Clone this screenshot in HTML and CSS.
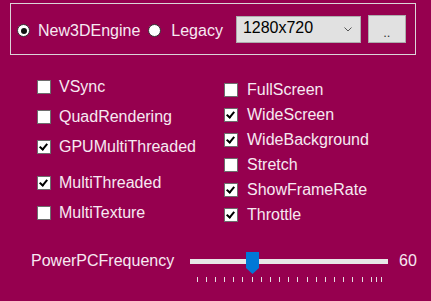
FILE: index.html
```html
<!DOCTYPE html>
<html lang="en">
<head>
    <meta charset="UTF-8">
    <title>Video Settings</title>
    <link rel="stylesheet" href="styles.css">
</head>
<body>

    <div class="group">
        <label class="radio-label">
            <span class="radio checked"></span>
            <span class="radio-text">New3DEngine</span>
        </label>
        <label class="radio-label legacy">
            <span class="radio"></span>
            <span class="radio-text">Legacy</span>
        </label>
        <div class="dropdown">
            <span>1280x720</span>
            <svg class="chevron" width="8" height="5" viewBox="0 0 8 5"><polyline points="0.5,0.5 4,4 7.5,0.5" fill="none" stroke="#555" stroke-width="1"/></svg>
        </div>
        <button class="browse-button">..</button>
    </div>

    <div class="options">
        <div class="col col-left">
            <div class="check-row"><span class="box"></span><span>VSync</span></div>
            <div class="check-row"><span class="box"></span><span>QuadRendering</span></div>
            <div class="check-row"><span class="box checked"></span><span>GPUMultiThreaded</span></div>
            <div class="check-row spaced"><span class="box checked"></span><span>MultiThreaded</span></div>
            <div class="check-row"><span class="box"></span><span>MultiTexture</span></div>
        </div>
        <div class="col col-right">
            <div class="check-row"><span class="box"></span><span>FullScreen</span></div>
            <div class="check-row"><span class="box checked"></span><span>WideScreen</span></div>
            <div class="check-row"><span class="box checked"></span><span>WideBackground</span></div>
            <div class="check-row"><span class="box"></span><span>Stretch</span></div>
            <div class="check-row"><span class="box checked"></span><span>ShowFrameRate</span></div>
            <div class="check-row last"><span class="box checked"></span><span>Throttle</span></div>
        </div>
    </div>

    <div class="slider-row">
        <span class="slider-label">PowerPCFrequency</span>
        <div class="slider">
            <div class="track"></div>
            <svg class="thumb" width="13" height="22" viewBox="0 0 13 22"><polygon points="0,0 13,0 13,16 6.5,22 0,16" fill="#0078d7"/></svg>
            <svg class="ticks" width="198" height="5" viewBox="0 0 198 5">
                <g stroke="#e6dce2" stroke-width="1">
                    <line x1="7.5" y1="0" x2="7.5" y2="5"/>
                    <line x1="16.5" y1="0" x2="16.5" y2="5"/>
                    <line x1="25.5" y1="0" x2="25.5" y2="5"/>
                    <line x1="34.5" y1="0" x2="34.5" y2="5"/>
                    <line x1="43.5" y1="0" x2="43.5" y2="5"/>
                    <line x1="52.5" y1="0" x2="52.5" y2="5"/>
                    <line x1="62.5" y1="0" x2="62.5" y2="5"/>
                    <line x1="71.5" y1="0" x2="71.5" y2="5"/>
                    <line x1="80.5" y1="0" x2="80.5" y2="5"/>
                    <line x1="89.5" y1="0" x2="89.5" y2="5"/>
                    <line x1="98.5" y1="0" x2="98.5" y2="5"/>
                    <line x1="107.5" y1="0" x2="107.5" y2="5"/>
                    <line x1="117.5" y1="0" x2="117.5" y2="5"/>
                    <line x1="126.5" y1="0" x2="126.5" y2="5"/>
                    <line x1="135.5" y1="0" x2="135.5" y2="5"/>
                    <line x1="144.5" y1="0" x2="144.5" y2="5"/>
                    <line x1="153.5" y1="0" x2="153.5" y2="5"/>
                    <line x1="162.5" y1="0" x2="162.5" y2="5"/>
                    <line x1="172.5" y1="0" x2="172.5" y2="5"/>
                    <line x1="181.5" y1="0" x2="181.5" y2="5"/>
                    <line x1="186.5" y1="0" x2="186.5" y2="5"/>
                    <line x1="191.5" y1="0" x2="191.5" y2="5"/>
                </g>
            </svg>
        </div>
        <span class="slider-value">60</span>
    </div>

</body>
</html>
```

FILE: styles.css
```css
body {
    font-family: "Liberation Sans", Arial, sans-serif;
    font-size: 16px;
    margin: 0;
    padding: 0;
    width: 431px;
    height: 301px;
    overflow: hidden;
    background-color: #96004f;
    color: #f7e9f2;
}

.group {
    box-sizing: border-box;
    width: 406px;
    height: 52px;
    margin: 3px 0 0 10px;
    padding-left: 6px;
    border: 1px solid #dcd4d8;
    display: flex;
    align-items: center;
}

.radio-label {
    display: flex;
    align-items: center;
    margin-top: 3px;
}

.radio-label.legacy {
    margin-left: 8px;
}

.radio {
    box-sizing: border-box;
    width: 13px;
    height: 13px;
    border-radius: 50%;
    border: 1px solid #333;
    background-color: #fff;
    position: relative;
}

.radio.checked::after {
    content: "";
    position: absolute;
    left: 2.5px;
    top: 2.5px;
    width: 6px;
    height: 6px;
    border-radius: 50%;
    background-color: #111;
}

.radio-text {
    margin-left: 8px;
}

.legacy .radio-text {
    margin-left: 10px;
}

.dropdown {
    box-sizing: border-box;
    width: 125px;
    height: 27px;
    margin-left: 13px;
    padding: 0 8px 0 6px;
    background-color: #e1e1e1;
    border: 1px solid #adadad;
    color: #000;
    display: flex;
    align-items: center;
    justify-content: space-between;
}

.dropdown span {
    margin-top: -2px;
}

.browse-button {
    box-sizing: border-box;
    width: 38px;
    height: 28px;
    margin-left: 7px;
    padding: 6px 0 0 0;
    background-color: #e1e1e1;
    border: 1px solid #adadad;
    color: #333;
    font-family: inherit;
    font-size: 13px;
}

.options {
    display: flex;
    margin-top: 17px;
}

.col {
    display: flex;
    flex-direction: column;
}

.col-left {
    box-sizing: border-box;
    width: 224px;
    padding-left: 37px;
}

.col-right {
    padding-top: 5px;
}

.check-row {
    display: flex;
    align-items: center;
}

.col-left .check-row {
    height: 30px;
}

.col-left .check-row.spaced {
    margin-top: 6px;
}

.col-right .check-row {
    height: 25px;
}

.col-right .check-row.last {
    height: 26px;
}

.box {
    box-sizing: border-box;
    width: 14px;
    height: 14px;
    border: 1px solid #6d6d6d;
    background-color: #fff;
    margin-right: 8px;
    position: relative;
}

.col-right .box {
    margin-right: 9px;
}

.box.checked::after {
    content: "";
    position: absolute;
    left: 3px;
    top: 1px;
    width: 3px;
    height: 6px;
    border-right: 2px solid #000;
    border-bottom: 2px solid #000;
    transform: rotate(40deg);
}

.slider-row {
    display: flex;
    align-items: flex-start;
    margin-top: 22px;
    padding-left: 31px;
}

.slider-label {
    width: 159px;
    line-height: 18px;
    padding-top: 2px;
}

.slider {
    position: relative;
    width: 198px;
    height: 34px;
}

.track {
    margin-top: 9px;
    height: 5px;
    background-color: #e7e7e7;
}

.thumb {
    position: absolute;
    left: 56px;
    top: 2px;
}

.ticks {
    position: absolute;
    left: 0;
    top: 27px;
}

.slider-value {
    margin-left: 11px;
    line-height: 18px;
    padding-top: 2px;
}
```
